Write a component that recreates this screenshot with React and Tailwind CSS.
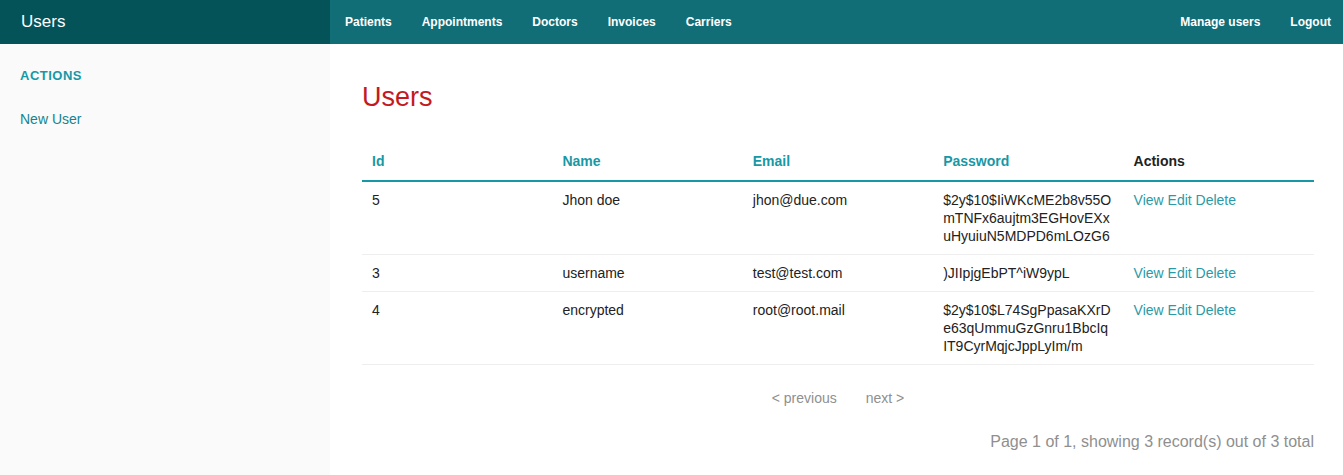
import React from 'react';

const users = [
  { id: 5, name: 'Jhon doe', email: 'jhon@due.com', password: '$2y$10$IiWKcME2b8v55OmTNFx6aujtm3EGHovEXxuHyuiuN5MDPD6mLOzG6' },
  { id: 3, name: 'username', email: 'test@test.com', password: ')JIIpjgEbPT^iW9ypL' },
  { id: 4, name: 'encrypted', email: 'root@root.mail', password: '$2y$10$L74SgPpasaKXrDe63qUmmuGzGnru1BbcIqIT9CyrMqjcJppLyIm/m' },
];

const navLeft = ['Patients', 'Appointments', 'Doctors', 'Invoices', 'Carriers'];

export default function App() {
  return (
    <div className="min-h-[475px] flex flex-col font-['Liberation_Sans',Arial,sans-serif] text-[#222] bg-white">
      {/* Top bar */}
      <div className="h-[44px] flex shrink-0">
        <div className="w-[330px] bg-[#035359] flex items-center pl-[21px]">
          <span className="text-white text-[17px]">Users</span>
        </div>
        <div className="flex-1 bg-[#116d76] flex items-center justify-between">
          <ul className="flex">
            {navLeft.map((item) => (
              <li key={item} className="px-[15px] text-white text-[12px] font-bold">
                {item}
              </li>
            ))}
          </ul>
          <ul className="flex gap-[30px] pr-[12px]">
            <li className="text-white text-[12px] font-bold">Manage users</li>
            <li className="text-white text-[12px] font-bold">Logout</li>
          </ul>
        </div>
      </div>

      <div className="flex flex-1">
        {/* Sidebar */}
        <aside className="w-[330px] shrink-0 bg-[#fafafa] pl-[20px] pt-[24px] min-h-[431px]">
          <div className="text-[13px] tracking-[0.5px] leading-[16px] font-bold uppercase text-[#1798a5]">Actions</div>
          <div className="mt-[26px] text-[14px] leading-[18px] text-[#15848f]">New User</div>
        </aside>

        {/* Content */}
        <main className="flex-1 pl-[32px] pr-[29px]">
          <h3 className="mt-[37px] text-[27px] leading-[32px] text-[#c4191e]">Users</h3>
          <table className="mt-[29px] w-full table-fixed border-collapse text-[14px]">
            <thead>
              <tr className="border-b-2 border-[#1798a5]">
                <th className="text-left font-bold px-[10px] py-[9px] leading-[20px] text-[#1798a5]">Id</th>
                <th className="text-left font-bold px-[10px] py-[9px] leading-[20px] text-[#1798a5]">Name</th>
                <th className="text-left font-bold px-[10px] py-[9px] leading-[20px] text-[#1798a5]">Email</th>
                <th className="text-left font-bold px-[10px] py-[9px] leading-[20px] text-[#1798a5]">Password</th>
                <th className="text-left font-bold px-[10px] py-[9px] leading-[20px] text-[#222]">Actions</th>
              </tr>
            </thead>
            <tbody>
              {users.map((u) => (
                <tr key={u.id} className="border-b border-[#eeeeee] align-top">
                  <td className="px-[10px] py-[9px] leading-[18px]">{u.id}</td>
                  <td className="px-[10px] py-[9px] leading-[18px]">{u.name}</td>
                  <td className="px-[10px] py-[9px] leading-[18px]">{u.email}</td>
                  <td className="pl-[10px] pr-[12px] py-[9px] leading-[18px] break-all">{u.password}</td>
                  <td className="px-[10px] py-[9px] leading-[18px] text-[#2a9aa6]">
                    <a>View</a> <a>Edit</a> <a>Delete</a>
                  </td>
                </tr>
              ))}
            </tbody>
          </table>

          <ul className="mt-[24px] flex justify-center gap-[29px] text-[14px] leading-[18px] text-[#8f8f8f]">
            <li>&lt; previous</li>
            <li>next &gt;</li>
          </ul>
          <p className="mt-[25px] text-right text-[16px] leading-[20px] text-[#8f8f8f]">
            Page 1 of 1, showing 3 record(s) out of 3 total
          </p>
        </main>
      </div>
    </div>
  );
}
